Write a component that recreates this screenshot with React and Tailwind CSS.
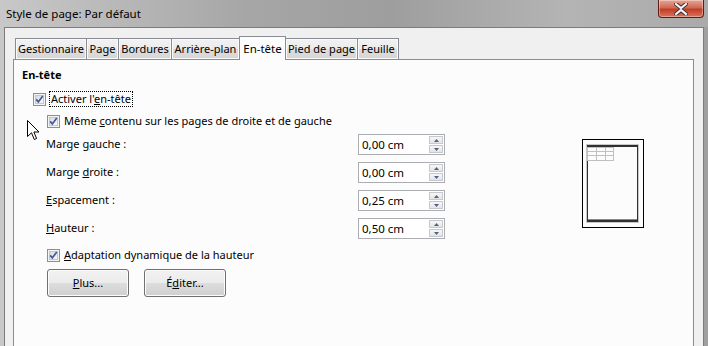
import React from 'react';

const ui = "font-['Segoe_UI','Noto_Sans',sans-serif] text-[11px] text-black whitespace-nowrap";

function CheckBox() {
  return (
    <svg width="13" height="13" viewBox="0 0 13 13" className="shrink-0">
      <defs>
        <linearGradient id="cbg" x1="0" y1="0" x2="1" y2="1">
          <stop offset="0" stopColor="#d9d9d9" />
          <stop offset="1" stopColor="#fbfbfb" />
        </linearGradient>
      </defs>
      <rect x="0.5" y="0.5" width="12" height="12" fill="#f4f4f4" stroke="#8e8f8f" />
      <rect x="2.5" y="2.5" width="8" height="8" fill="url(#cbg)" stroke="#c3c6cb" />
      <path d="M3.2 6.4 L5.3 8.9 L9.8 2.9" fill="none" stroke="#3c5b9a" strokeWidth="1.7" />
    </svg>
  );
}

function Spin({ value }) {
  return (
    <div className="w-[87px] h-[21px] border border-[#abadb3] bg-white flex items-center justify-between pl-[3px] pr-[1px]">
      <span className="text-[11.5px]">{value}</span>
      <div className="flex flex-col gap-[1px]">
        <div className="w-[14px] h-[8px] border border-[#c6c8cc] bg-[linear-gradient(#f7f7f7,#e4e4e4)] flex items-center justify-center">
          <svg width="5" height="3" viewBox="0 0 5 3"><path d="M0 3 L2.5 0 L5 3 Z" fill="#4d6185" /></svg>
        </div>
        <div className="w-[14px] h-[8px] border border-[#c6c8cc] bg-[linear-gradient(#f7f7f7,#e4e4e4)] flex items-center justify-center">
          <svg width="5" height="3" viewBox="0 0 5 3"><path d="M0 0 L2.5 3 L5 0 Z" fill="#4d6185" /></svg>
        </div>
      </div>
    </div>
  );
}

function Tab({ label, width, active }) {
  if (active) {
    return (
      <div
        className="relative z-10 -ml-px h-[24px] -mb-px border border-b-0 border-[#898c95] bg-[#fcfcfc] flex items-start justify-center pt-[3px] text-[11.5px]"
        style={{ width }}
      >
        {label}
      </div>
    );
  }
  return (
    <div
      className="-ml-px first:ml-0 h-[21px] border border-b-0 border-[#898c95] bg-[linear-gradient(#f2f2f2,#ebebeb_50%,#dddddd_50%,#d6d6d6)] shadow-[inset_0_0_0_1px_#fafafa] flex items-center justify-center"
      style={{ width }}
    >
      {label}
    </div>
  );
}

function Button({ children }) {
  return (
    <div className="w-[82px] h-[28px] rounded-[3px] border border-[#707070] bg-[linear-gradient(#f2f2f2,#ebebeb_50%,#dddddd_50%,#cfcfcf)] shadow-[inset_0_0_0_1px_#fcfcfc] flex items-center justify-center">
      {children}
    </div>
  );
}

function PagePreview() {
  return (
    <svg width="62" height="89" viewBox="0 0 62 89" className="mt-[79px] shrink-0">
      <rect x="0.5" y="0.5" width="61" height="88" fill="#fcfcfc" stroke="#000" />
      <rect x="4" y="5" width="53" height="79" fill="#c8c8c8" />
      <rect x="5" y="6" width="51" height="77" fill="#303030" />
      <rect x="6" y="8" width="49" height="72" fill="#fcfcfc" />
      <g stroke="#c0c0c0" fill="none">
        <rect x="5.5" y="8.5" width="26" height="13" />
        <line x1="14.5" y1="8" x2="14.5" y2="22" />
        <line x1="23.5" y1="8" x2="23.5" y2="22" />
        <line x1="5" y1="12.5" x2="31" y2="12.5" />
        <line x1="5" y1="16.5" x2="31" y2="16.5" />
      </g>
      <rect x="6" y="80" width="49" height="1" fill="#8a8a8a" />
    </svg>
  );
}

function Cursor() {
  return (
    <svg width="13" height="21" viewBox="0 0 13 21" className="absolute left-[27px] top-[120px]">
      <path
        d="M0.5 0.5 L0.5 16.5 L4.5 12.8 L7.3 19.5 L9.6 18.5 L6.9 12 L12 12 Z"
        fill="#fff"
        stroke="#000"
        strokeLinejoin="round"
      />
    </svg>
  );
}

export default function App() {
  return (
    <div className={`${ui} relative w-[708px] h-[346px] overflow-hidden flex flex-col bg-[linear-gradient(90deg,#c8c8c8,#a6a6a6_35%,#9e9e9e_55%,#b4b4b4_80%,#aaaaaa)]`}>
      {/* title bar */}
      <div className="h-[27px] flex justify-between shrink-0">
        <div className="pl-[6px] pt-[5px] text-[11.5px]">Style de page: Par défaut</div>
        <div className="mr-[4px] w-[46px] h-[18px] rounded-b-[4px] border border-t-0 border-[#5a1e15] bg-[linear-gradient(#e8a596,#cf6a55_45%,#c23d26_55%,#d9735c)] shadow-[inset_0_0_0_1px_rgba(255,255,255,0.35)] flex items-center justify-center">
          <svg width="14" height="12" viewBox="0 0 14 12">
            <path d="M2 1 L7 5 L12 1 M2 11 L7 7 L12 11" fill="none" stroke="#3a2a2a" strokeWidth="4" strokeLinecap="square" />
            <path d="M2 1 L7 5 L12 1 M2 11 L7 7 L12 11" fill="none" stroke="#f4f4f4" strokeWidth="2.2" strokeLinecap="square" />
          </svg>
        </div>
      </div>

      {/* client area */}
      <div className="flex-1 mx-[4px] border border-b-0 border-[#7c7c7c] bg-[#f1f0f1] pl-[8px] flex flex-col">
        <div className="flex items-end pl-[2px] pt-[8px]">
          <Tab label="Gestionnaire" width={72} />
          <Tab label="Page" width={33} />
          <Tab label="Bordures" width={54} />
          <Tab label="Arrière-plan" width={69} />
          <Tab label="En-tête" width={47} active />
          <Tab label="Pied de page" width={73} />
          <Tab label="Feuille" width={42} />
        </div>

        <div className="flex-1 w-[681px] border border-b-0 border-[#898c95] bg-[#fcfcfc] flex">
          <div className="w-[568px] pl-[8px] pt-[7px] flex flex-col">
            <div className="h-[16px] flex items-center font-bold">En-tête</div>

            <div className="mt-[8px] h-[16px] flex items-center pl-[11px]">
              <CheckBox />
              <span className="ml-[4px] px-[1px] leading-[14px] outline outline-1 outline-dotted outline-black">
                Activer l'<span className="underline">e</span>n-tête
              </span>
            </div>

            <div className="mt-[6px] h-[16px] flex items-center pl-[25px]">
              <CheckBox />
              <span className="ml-[4px]">
                Même <span className="underline">c</span>ontenu sur les pages de droite et de gauche
              </span>
            </div>

            <div className="mt-[5px] flex flex-col gap-[7px] pl-[24px]">
              <div className="h-[21px] flex items-center">
                <span className="w-[312px]">Marge <span className="underline">g</span>auche :</span>
                <Spin value="0,00 cm" />
              </div>
              <div className="h-[21px] flex items-center">
                <span className="w-[312px]">Marge <span className="underline">d</span>roite :</span>
                <Spin value="0,00 cm" />
              </div>
              <div className="h-[21px] flex items-center">
                <span className="w-[312px]"><span className="underline">E</span>spacement :</span>
                <Spin value="0,25 cm" />
              </div>
              <div className="h-[21px] flex items-center">
                <span className="w-[312px]"><span className="underline">H</span>auteur :</span>
                <Spin value="0,50 cm" />
              </div>
            </div>

            <div className="mt-[8px] h-[16px] flex items-center pl-[25px]">
              <CheckBox />
              <span className="ml-[4px]">
                <span className="underline">A</span>daptation dynamique de la hauteur
              </span>
            </div>

            <div className="mt-[6px] flex gap-[15px] pl-[25px]">
              <Button><span className="underline">P</span>lus...</Button>
              <Button>É<span className="underline">d</span>iter...</Button>
            </div>
          </div>

          <PagePreview />
        </div>
      </div>

      <div className="absolute right-0 top-[27px] bottom-0 w-[4px] bg-[#a0a0a0]" />
      <Cursor />
    </div>
  );
}
